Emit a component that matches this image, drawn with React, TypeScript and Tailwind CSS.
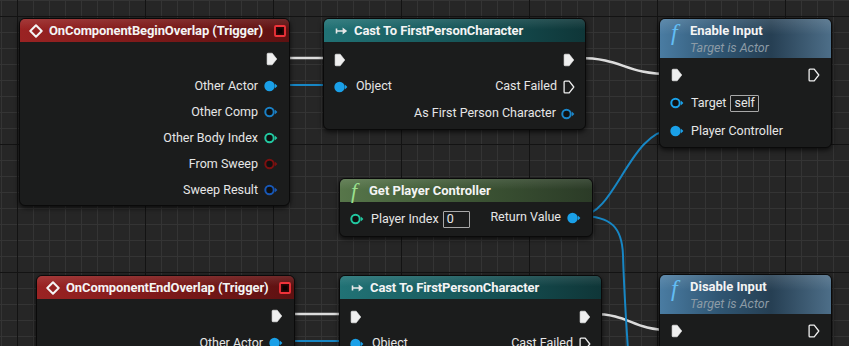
import { FC, ReactNode } from "react";

const WHITE = "#efefef";
const BLUE = "#1aa0e8";

// exec pin, filled when connected
const ExecPin: FC<{ filled?: boolean }> = ({ filled = true }) => (
  <svg width="12" height="14" viewBox="0 0 12 14" className="shrink-0">
    <path
      d="M2 1.2h4.2l4.6 5.8-4.6 5.8H2a0.9 0.9 0 0 1-0.9-0.9V2.1A0.9 0.9 0 0 1 2 1.2z"
      fill={filled ? WHITE : "none"}
      stroke={WHITE}
      strokeWidth={filled ? 0.6 : 1.3}
      strokeLinejoin="round"
    />
  </svg>
);

// data pin: filled dot or ring, with the little arrow
const DataPin: FC<{ color: string; ring?: boolean }> = ({ color, ring }) => (
  <svg width="14" height="12" viewBox="0 0 14 12" className="shrink-0">
    {ring ? (
      <circle cx="5.5" cy="6" r="4.2" fill="#101010" stroke={color} strokeWidth="2" />
    ) : (
      <circle cx="5.5" cy="6" r="5.2" fill={color} />
    )}
    <path d="M10.8 3.6 13.4 6 10.8 8.4Z" fill={color} />
  </svg>
);

const EventIcon = () => (
  <svg width="14" height="14" viewBox="0 0 14 14" className="shrink-0">
    <path d="M7 1.3 12.7 7 7 12.7 1.3 7Z" fill="none" stroke="#f4f4f4" strokeWidth="2" strokeLinejoin="round" />
  </svg>
);

const DelegateIcon = () => (
  <svg width="12" height="12" viewBox="0 0 12 12" className="shrink-0">
    <rect x="1" y="1" width="10" height="10" rx="1" fill="#2a0606" stroke="#f0333a" strokeWidth="1.8" />
    <rect x="3.6" y="3.6" width="4.8" height="4.8" fill="#0c0000" />
  </svg>
);

const CastIcon = () => (
  <svg width="13" height="10" viewBox="0 0 13 10" className="shrink-0">
    <path d="M1.5 2.5v5M1.5 5h8" stroke="#e8e8e8" strokeWidth="1.6" fill="none" />
    <path d="M7.6 1.5 12.2 5 7.6 8.5Z" fill="#e8e8e8" />
  </svg>
);

const Label: FC<{ children: ReactNode }> = ({ children }) => (
  <span className="text-[12.5px] leading-none text-[#e6e6e6] whitespace-nowrap">{children}</span>
);

const ValueBox: FC<{ children: ReactNode; className: string }> = ({ children, className }) => (
  <span
    className={`flex items-center border border-[#a8a8a8] rounded-[1px] px-[3px] text-[12.5px] leading-none text-[#e8e8e8] ${className}`}>
    {children}
  </span>
);

const EventNode: FC<{ title: string; className: string; rows: { label: string; color: string; ring?: boolean }[] }> = ({
  title,
  className,
  rows,
}) => (
  <div
    className={`absolute flex flex-col rounded-[6px] border border-[#0a0a0a] bg-[#1b1c1c] shadow-[0_2px_5px_rgba(0,0,0,0.7)] overflow-hidden ${className}`}>
    <div className="flex items-center h-[23px] pl-[9px] pr-[3px] gap-[6px] bg-[linear-gradient(180deg,rgba(255,255,255,0.10)_0%,rgba(255,255,255,0)_45%),linear-gradient(90deg,#9a2323_0%,#7c1919_50%,#5d1111_100%)]">
      <EventIcon />
      <span className="flex-1 text-[13px] font-bold tracking-[-0.1px] text-[#f4f4f4] whitespace-nowrap">{title}</span>
      <DelegateIcon />
    </div>
    <div className="flex flex-col pt-[4px] pb-[2px]">
      <div className="flex items-center justify-end h-[26px] mb-[1px] pr-[11px]">
        <ExecPin />
      </div>
      {rows.map((row) => (
        <div key={row.label} className="flex items-center justify-end h-[26px] pr-[11px] gap-[6px]">
          <Label>{row.label}</Label>
          <DataPin color={row.color} ring={row.ring} />
        </div>
      ))}
    </div>
  </div>
);

const CastNode: FC<{ className: string }> = ({ className }) => (
  <div
    className={`absolute flex flex-col rounded-[6px] border border-[#0a0a0a] bg-[#1b1c1c] shadow-[0_2px_5px_rgba(0,0,0,0.7)] overflow-hidden ${className}`}>
    <div className="flex items-center h-[23px] pl-[11px] gap-[6px] bg-[linear-gradient(180deg,rgba(255,255,255,0.10)_0%,rgba(255,255,255,0)_45%),linear-gradient(90deg,#217275_0%,#185a5d_45%,#0f3638_100%)]">
      <CastIcon />
      <span className="text-[13px] font-bold tracking-[-0.1px] text-[#f4f4f4] whitespace-nowrap">
        Cast To FirstPersonCharacter
      </span>
    </div>
    <div className="flex flex-col pt-[4px] pb-[2px]">
      <div className="flex items-center justify-between h-[27px] px-[10px]">
        <ExecPin />
        <ExecPin />
      </div>
      <div className="flex items-center justify-between h-[27px] px-[10px]">
        <div className="flex items-center gap-[8px]">
          <DataPin color={BLUE} />
          <Label>Object</Label>
        </div>
        <div className="flex items-center gap-[6px]">
          <Label>Cast Failed</Label>
          <ExecPin filled={false} />
        </div>
      </div>
      <div className="flex items-center justify-end h-[27px] pr-[10px] gap-[5px]">
        <Label>As First Person Character</Label>
        <DataPin color="#1b86c9" ring />
      </div>
    </div>
  </div>
);

const InputNode: FC<{ title: string; className: string }> = ({ title, className }) => (
  <div
    className={`absolute flex flex-col rounded-[6px] border border-[#0a0a0a] bg-[#1b1c1c] shadow-[0_2px_5px_rgba(0,0,0,0.7)] overflow-hidden ${className}`}>
    <div className="flex h-[39px] pl-[11px] gap-[6px] bg-[linear-gradient(180deg,rgba(255,255,255,0.12)_0%,rgba(255,255,255,0)_40%),linear-gradient(90deg,#4a7ca2_0%,#2f5572_35%,#263f53_65%,#4d6e88_100%)]">
      <span className="pt-[1px] w-[13px] text-[24px] leading-[24px] italic text-[#62bdf4] font-['Liberation_Serif','DejaVu_Serif',serif]">
        f
      </span>
      <div className="flex flex-col pt-[3px]">
        <span className="text-[13px] leading-[18px] font-bold text-[#f4f4f4] whitespace-nowrap">{title}</span>
        <span className="text-[12.5px] leading-[16px] italic text-[#8c9ba6] whitespace-nowrap">Target is Actor</span>
      </div>
    </div>
    <div className="flex flex-col pt-[3px] pb-[2px]">
      <div className="flex items-center justify-between h-[28px] px-[11px]">
        <ExecPin />
        <ExecPin filled={false} />
      </div>
      <div className="flex items-center h-[28px] pl-[10px] gap-[7px]">
        <DataPin color={BLUE} ring />
        <Label>Target</Label>
        <ValueBox className="h-[17px] -ml-[3px]">self</ValueBox>
      </div>
      <div className="flex items-center h-[28px] pl-[10px] gap-[7px]">
        <DataPin color={BLUE} />
        <Label>Player Controller</Label>
      </div>
    </div>
  </div>
);

const PlayerControllerNode = () => (
  <div className="absolute left-[339px] top-[178px] w-[254px] flex flex-col rounded-[6px] border border-[#0a0a0a] bg-[#1b1c1c] shadow-[0_2px_5px_rgba(0,0,0,0.7)] overflow-hidden">
    <div className="flex items-center h-[23px] pl-[11px] gap-[6px] bg-[linear-gradient(180deg,rgba(255,255,255,0.10)_0%,rgba(255,255,255,0)_45%),linear-gradient(90deg,#57764a_0%,#3f5836_45%,#2b3b27_100%)]">
      <span className="w-[12px] text-[22px] leading-none italic text-[#9be08e] font-['Liberation_Serif','DejaVu_Serif',serif]">
        f
      </span>
      <span className="text-[13px] font-bold text-[#f4f4f4] whitespace-nowrap">Get Player Controller</span>
    </div>
    <div className="flex items-center justify-between h-[26px] mt-[4px] mb-[4px] pl-[10px] pr-[11px]">
      <div className="flex items-center gap-[7px]">
        <DataPin color="#22c7a0" ring />
        <Label>Player Index</Label>
        <ValueBox className="h-[17px] w-[27px] -ml-[3px]">0</ValueBox>
      </div>
      <div className="flex items-center gap-[6px] -mt-[3px]">
        <Label>Return Value</Label>
        <DataPin color={BLUE} />
      </div>
    </div>
  </div>
);

// grid + wires, drawn under the nodes
const Canvas = () => (
  <svg className="absolute inset-0" width="849" height="346">
    <defs>
      <pattern id="minor" x="1" y="0" width="16" height="16" patternUnits="userSpaceOnUse">
        <path d="M0.5 0V16M0 0.5H16" stroke="#343434" strokeWidth="1" />
      </pattern>
      <pattern id="major" x="17" y="16" width="128" height="128" patternUnits="userSpaceOnUse">
        <path d="M0.5 0V128M0 0.5H128" stroke="#131313" strokeWidth="1" />
      </pattern>
    </defs>
    <rect width="849" height="346" fill="#262626" />
    <rect width="849" height="346" fill="url(#minor)" />
    <rect width="849" height="346" fill="url(#major)" />

    <g fill="none" strokeLinecap="round">
      {/* exec wires */}
      <path d="M282 58H336" stroke="#dcdcdc" strokeWidth="2.5" />
      <path d="M578 58C625 58 622 74 672 74" stroke="#dcdcdc" strokeWidth="2.5" />
      <path d="M287 314H352" stroke="#dcdcdc" strokeWidth="2.5" />
      <path d="M592 314C632 314 630 330 672 330" stroke="#dcdcdc" strokeWidth="2.5" />
      {/* data wires */}
      <path d="M282 85H336" stroke="#1786c4" strokeWidth="2" />
      <path d="M287 341H352" stroke="#1786c4" strokeWidth="2" />
      <path d="M580 216C615 216 630 130 672 130" stroke="#1786c4" strokeWidth="2" />
      <path d="M580 216C612 216 622 228 623 255C624 290 626 320 628 350" stroke="#1786c4" strokeWidth="2" />
    </g>
  </svg>
);

export default function App() {
  return (
    <div className="relative w-[849px] h-[346px] overflow-hidden bg-[#262626] font-['Roboto','Liberation_Sans',sans-serif]">
      <Canvas />

      <EventNode
        title="OnComponentBeginOverlap (Trigger)"
        className="left-[19px] top-[18px] w-[271px]"
        rows={[
          { label: "Other Actor", color: BLUE },
          { label: "Other Comp", color: "#1a7fc4", ring: true },
          { label: "Other Body Index", color: "#22c7a0", ring: true },
          { label: "From Sweep", color: "#7c1010", ring: true },
          { label: "Sweep Result", color: "#1857b5", ring: true },
        ]}
      />
      <CastNode className="left-[323px] top-[18px] w-[263px]" />
      <InputNode title="Enable Input" className="left-[659px] top-[18px] w-[173px]" />

      <PlayerControllerNode />

      <EventNode
        title="OnComponentEndOverlap (Trigger)"
        className="left-[36px] top-[275px] w-[259px]"
        rows={[
          { label: "Other Actor", color: BLUE },
          { label: "Other Comp", color: "#1a7fc4", ring: true },
        ]}
      />
      <CastNode className="left-[339px] top-[275px] w-[263px]" />
      <InputNode title="Disable Input" className="left-[659px] top-[274px] w-[173px]" />
    </div>
  );
}
